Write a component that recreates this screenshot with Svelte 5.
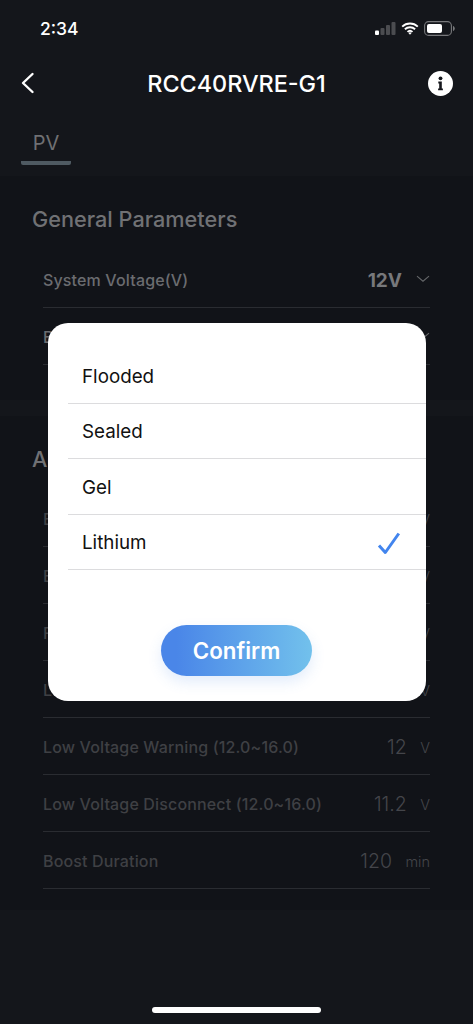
<script>
	const generalRows = [
		{ label: 'System Voltage(V)', value: '12V', strong: true },
		{ label: 'Battery Type', value: 'Lithium', strong: true }
	];

	const advancedRows = [
		{ label: 'Equalization Voltage', value: '14.4', unit: 'V' },
		{ label: 'Boost Voltage', value: '14.4', unit: 'V' },
		{ label: 'Float Voltage', value: '13.8', unit: 'V' },
		{ label: 'Low Voltage Reconnect', value: '12.6', unit: 'V' },
		{ label: 'Low Voltage Warning (12.0~16.0)', value: '12', unit: 'V' },
		{ label: 'Low Voltage Disconnect (12.0~16.0)', value: '11.2', unit: 'V' },
		{ label: 'Boost Duration', value: '120', unit: 'min' }
	];

	const options = ['Flooded', 'Sealed', 'Gel', 'Lithium'];
	let selected = $state('Lithium');
</script>

<div class="page">
	<div class="status">
		<span class="time">2:34</span>
		<div class="status-icons">
			<svg width="21" height="13" viewBox="0 0 21 13">
				<rect x="0" y="8.5" width="4" height="4.5" rx="1" fill="#fff" />
				<rect x="5.5" y="6" width="4" height="7" rx="1" fill="#4b4c50" />
				<rect x="11" y="3" width="4" height="10" rx="1" fill="#4b4c50" />
				<rect x="16.5" y="0" width="4" height="13" rx="1" fill="#4b4c50" />
			</svg>
			<svg width="18" height="13" viewBox="0 0 18 13">
				<path d="M1.2 4.6a11.2 11.2 0 0 1 15.6 0M3.9 7.3a7.4 7.4 0 0 1 10.2 0M6.5 9.9a3.6 3.6 0 0 1 5 0" fill="none" stroke="#fff" stroke-width="1.9" />
				<path d="M7.4 11l1.6 1.8 1.6-1.8a2.3 2.3 0 0 0-3.2 0z" fill="#fff" />
			</svg>
			<svg width="31" height="15" viewBox="0 0 31 15">
				<rect x="0.6" y="0.6" width="26.8" height="13.8" rx="4" fill="none" stroke="#77787b" stroke-width="1.1" />
				<rect x="3" y="3" width="15" height="9" rx="2" fill="#fff" />
				<path d="M29 5v5c1-.3 1.8-1.3 1.8-2.5S30 5.300 29 5z" fill="#77787b" />
			</svg>
		</div>
	</div>

	<header class="nav">
		<svg class="back" width="15" height="22" viewBox="0 0 15 22">
			<path d="M12.500 2 3 11l9.500 9" fill="none" stroke="#fff" stroke-width="2.4" stroke-linecap="round" stroke-linejoin="round" />
		</svg>
		<h1>RCC40RVRE-G1</h1>
		<svg class="info" width="25" height="25" viewBox="0 0 25 25">
			<circle cx="12.500" cy="12.500" r="12.500" fill="#fff" />
			<circle cx="12.500" cy="7.300" r="1.900" fill="#14161b" />
			<path d="M10.300 10.600h3.500v6.800h1.100v1.900h-4.800v-1.900h1.100v-4.900h-.9z" fill="#14161b" />
		</svg>
	</header>

	<div class="tabs">
		<div class="tab">PV</div>
	</div>

	<section class="general">
		<h2>General Parameters</h2>
		{#each generalRows as row}
			<div class="row">
				<span class="label bright">{row.label}</span>
				<span class="strong">{row.value}</span>
				<svg class="chevron" width="14" height="8" viewBox="0 0 14 8">
					<path d="M1 1.200 7 6.200l6-5" fill="none" stroke="#65676a" stroke-width="1.100" />
				</svg>
			</div>
		{/each}
	</section>

	<section class="advanced">
		<h2>Advanced Parameters</h2>
		{#each advancedRows as row}
			<div class="row">
				<span class="label">{row.label}</span>
				<span class="value">{row.value}</span>
				<span class="unit">{row.unit}</span>
			</div>
		{/each}
	</section>

	<div class="home"></div>

	<div class="modal">
		<ul>
			{#each options as option}
				<li>
					<button class="option" onclick={() => (selected = option)}>
						<span>{option}</span>
						{#if selected === option}
							<svg width="24" height="24" viewBox="0 0 24 24">
								<path d="M2 14.500 8.300 21.500 21.800 2.500" fill="none" stroke="#4285ee" stroke-width="3" stroke-linejoin="round" />
							</svg>
						{/if}
					</button>
				</li>
			{/each}
		</ul>
		<button class="confirm">Confirm</button>
	</div>
</div>

<style>
	:global(body) {
		background: #14161b;
	}

	.page {
		position: relative;
		display: flex;
		flex-direction: column;
		width: 473px;
		height: 1024px;
		overflow: hidden;
		background: #14161b;
		font-family: Inter, "Liberation Sans", sans-serif;
	}

	.status {
		display: flex;
		align-items: center;
		justify-content: space-between;
		height: 56px;
		padding: 0 18px 0 40px;
		box-sizing: border-box;
	}

	.time {
		color: #fff;
		font-size: 17.500px;
		font-weight: 500;
	}

	.status-icons {
		display: flex;
		align-items: center;
		gap: 5px;
	}

	.nav {
		display: flex;
		align-items: center;
		justify-content: space-between;
		height: 54px;
		padding: 0 20px 0 20px;
	}

	.nav h1 {
		margin: 0 0 0 10px;
		color: #fff;
		font-size: 23.400px;
		font-weight: 500;
	}

	.tabs {
		height: 66px;
		padding: 17px 0 0 21px;
		box-sizing: border-box;
	}

	.tab {
		width: 50px;
		height: 34px;
		border-bottom: 4px solid #4f5a62;
		border-radius: 0 0 2px 2px;
		color: #6f7073;
		font-size: 20px;
		line-height: 33px;
		text-align: center;
	}

	section {
		padding: 0 43px 0 43px;
		background: #111318;
	}

	.general {
		height: 224px;
	}

	.advanced {
		height: 494px;
		margin-top: 16px;
	}

	h2 {
		margin: 0 0 0 -11px;
		padding-top: 30px;
		height: 45px;
		color: #707174;
		font-size: 21.700px;
		font-weight: 500;
		line-height: 26px;
	}

	.advanced h2 {
		height: 44px;
	}

	.row {
		display: flex;
		align-items: center;
		height: 57px;
		padding-top: 2px;
		box-sizing: border-box;
		border-bottom: 1px solid #2a2c31;
	}

	.label {
		flex: 1;
		color: #3f4044;
		font-size: 16px;
		font-weight: 500;
		letter-spacing: 0.15px;
	}

	.label.bright {
		color: #6b6c70;
	}

	.strong {
		color: #77787b;
		font-size: 19px;
		font-weight: 700;
		margin-right: 14px;
	}

	.chevron {
		flex: none;
		margin-top: -2px;
	}

	.value {
		color: #44454a;
		font-size: 19.500px;
		font-weight: 300;
		margin-right: 13.500px;
	}

	.unit {
		color: #44454a;
		font-size: 14.500px;
		font-weight: 300;
	}

	.home {
		width: 169px;
		height: 6px;
		margin: auto auto 11px;
		border-radius: 3px;
		background: #fff;
	}

	.modal {
		position: absolute;
		top: 323px;
		left: 47.500px;
		width: 378.500px;
		height: 378px;
		padding: 25px 0 0 20.500px;
		box-sizing: border-box;
		border-radius: 20px;
		background: #fff;
	}

	ul {
		margin: 0;
		padding: 0;
		list-style: none;
	}

	li {
		height: 55.500px;
		box-sizing: border-box;
		border-bottom: 1px solid #dcdcde;
	}

	.option {
		display: flex;
		align-items: center;
		justify-content: space-between;
		width: 100%;
		height: 100%;
		padding: 2px 25px 0 14px;
		border: none;
		background: none;
		color: #111;
		font: inherit;
		font-size: 18.800px;
		cursor: pointer;
	}

	.confirm {
		display: block;
		width: 151px;
		height: 51px;
		margin: 55px 0 0 93px;
		border: none;
		border-radius: 26px;
		background: linear-gradient(90deg, #4a86e8 10%, #72c1ec 100%);
		box-shadow: 0 6px 14px rgba(74, 134, 232, 0.16);
		color: #fff;
		font: inherit;
		font-size: 22.300px;
		font-weight: 600;
		cursor: pointer;
	}
</style>
